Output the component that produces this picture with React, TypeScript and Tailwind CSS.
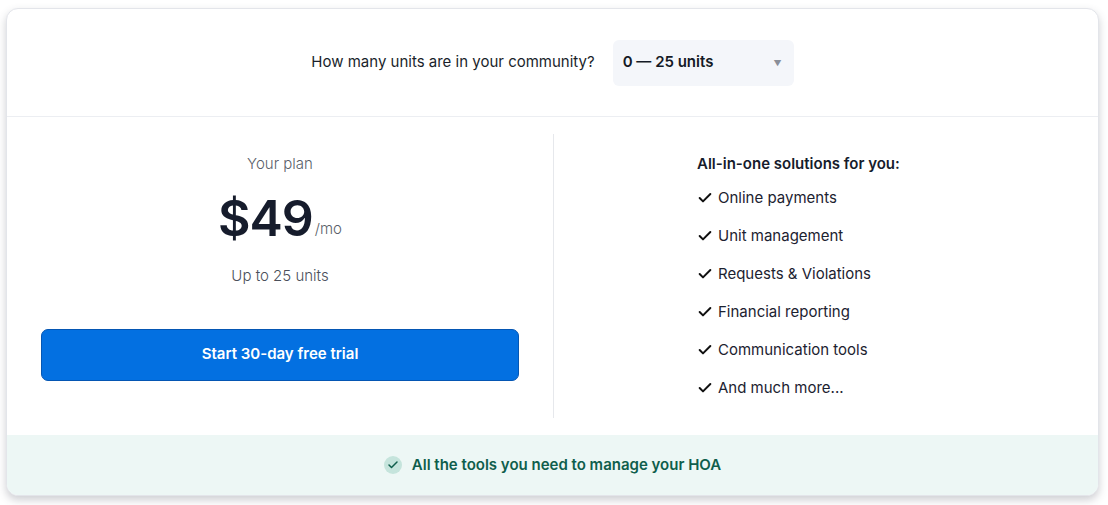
import { Check } from 'lucide-react';

const features = [
  'Online payments',
  'Unit management',
  'Requests & Violations',
  'Financial reporting',
  'Communication tools',
  'And much more...',
];

export default function App() {
  return (
    <div className="min-h-[505px] bg-white pl-[6px] pr-[9px] pt-[8px] pb-[11px]" style={{ fontFamily: 'Inter, "Noto Sans", sans-serif' }}>
      <div className="rounded-[12px] border border-[#e3e5ea] bg-white overflow-hidden shadow-[0_4px_8px_rgba(60,64,80,0.25)]">
        <div className="h-[108px] flex items-center justify-center gap-[18px] border-b border-[#eceef2]">
          <span className="text-[15px] text-[#1a1f2b]">How many units are in your community?</span>
          <div className="w-[181px] h-[46px] rounded-[6px] bg-[#f4f6fa] flex items-center justify-between pl-[10px] pr-[12px]">
            <span className="text-[15px] font-semibold text-[#141a26]">0 — 25 units</span>
            <span className="text-[8px] text-[#8a8f99]">▼</span>
          </div>
        </div>

        <div className="flex h-[318px] py-[17px]">
          <div className="w-[547px] flex flex-col items-center border-r border-[#e6e8ec] pt-[19px]">
            <div className="text-[15px] text-[#5a5f6a] font-light leading-[22px]">Your plan</div>
            <div className="flex items-end mt-[13px] text-[#161c2c]">
              <span className="text-[50px] font-semibold leading-[60px] tracking-[-1px]">$49</span>
              <span className="text-[15px] text-[#5a5f6a] font-light mb-[8px] ml-[2px]">/mo</span>
            </div>
            <div className="text-[15px] text-[#4a4f5a] font-light mt-[17px]">Up to 25 units</div>
            <button className="mt-[41px] w-[478px] h-[52px] rounded-[7px] bg-[#0370e1] border border-[#0556b3] text-white text-[15px] font-semibold">
              Start 30-day free trial
            </button>
          </div>
          <div className="flex-1 pl-[143px] pt-[19px]">
            <div className="text-[15px] font-semibold text-[#161c2c] leading-[22px]">All-in-one solutions for you:</div>
            <ul className="mt-[12px] flex flex-col gap-[16px]">
              {features.map((f) => (
                <li key={f} className="flex items-center gap-[5px] text-[15px] text-[#1c2230] leading-[22px]">
                  <Check size={16} strokeWidth={3} className="text-[#111]" />
                  {f}
                </li>
              ))}
            </ul>
          </div>
        </div>

        <div className="h-[60px] bg-[#edf7f5] flex items-center justify-center gap-[10px]">
          <span className="w-[18px] h-[18px] rounded-full bg-[#c5e4dc] flex items-center justify-center">
            <Check size={12} strokeWidth={3} className="text-[#0f5e4c]" />
          </span>
          <span className="text-[15px] font-semibold text-[#0f5e4c]">All the tools you need to manage your HOA</span>
        </div>
      </div>
    </div>
  );
}
